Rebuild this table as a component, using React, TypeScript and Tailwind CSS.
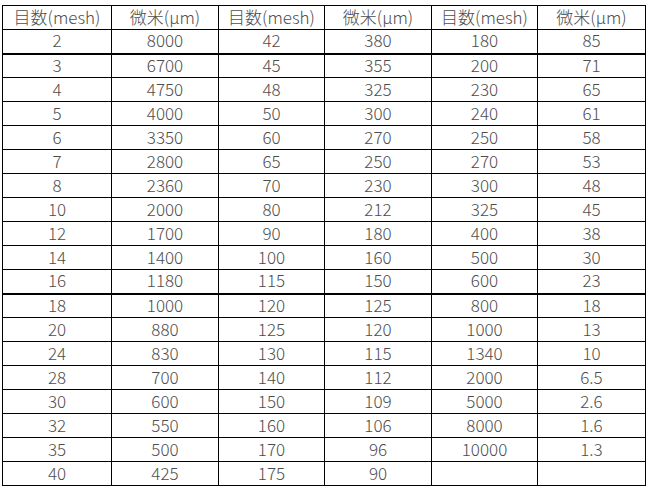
import React from 'react';

const header = ['目数(mesh)', '微米(μm)', '目数(mesh)', '微米(μm)', '目数(mesh)', '微米(μm)'];

const rows: string[][] = [
  ['2', '8000', '42', '380', '180', '85'],
  ['3', '6700', '45', '355', '200', '71'],
  ['4', '4750', '48', '325', '230', '65'],
  ['5', '4000', '50', '300', '240', '61'],
  ['6', '3350', '60', '270', '250', '58'],
  ['7', '2800', '65', '250', '270', '53'],
  ['8', '2360', '70', '230', '300', '48'],
  ['10', '2000', '80', '212', '325', '45'],
  ['12', '1700', '90', '180', '400', '38'],
  ['14', '1400', '100', '160', '500', '30'],
  ['16', '1180', '115', '150', '600', '23'],
  ['18', '1000', '120', '125', '800', '18'],
  ['20', '880', '125', '120', '1000', '13'],
  ['24', '830', '130', '115', '1340', '10'],
  ['28', '700', '140', '112', '2000', '6.5'],
  ['30', '600', '150', '109', '5000', '2.6'],
  ['32', '550', '160', '106', '8000', '1.6'],
  ['35', '500', '170', '96', '10000', '1.3'],
  ['40', '425', '175', '90', '', ''],
];

// rows followed by a heavier rule in the scan
const thick = new Set([0, 10]);

const App: React.FC = () => {
  return (
    <div className="w-[649px] h-[492px] bg-white pt-[5px] pl-[2px] overflow-hidden">
      <table
        className="w-[643px] table-fixed border-collapse border border-black text-[17px] font-light text-[#4d4d4d]"
        style={{ fontFamily: '"Noto Sans CJK JP", "Liberation Sans", sans-serif' }}
      >
        <colgroup>
          <col className="w-[109px]" />
          <col className="w-[107px]" />
          <col className="w-[106px]" />
          <col className="w-[107px]" />
          <col className="w-[106px]" />
          <col className="w-[108px]" />
        </colgroup>
        <thead>
          <tr className="h-[24px]">
            {header.map((h, i) => (
              <th key={i} className="border border-black p-0 pb-[3px] font-light leading-none text-center">
                {h}
              </th>
            ))}
          </tr>
        </thead>
        <tbody>
          {rows.map((row, r) => (
            <tr key={r} className="h-[24px]">
              {row.map((cell, c) => (
                <td
                  key={c}
                  className={
                    thick.has(r)
                      ? 'border border-b-2 border-black p-0 pb-[3px] leading-none text-center'
                      : 'border border-black p-0 pb-[3px] leading-none text-center'
                  }
                >
                  {cell}
                </td>
              ))}
            </tr>
          ))}
        </tbody>
      </table>
    </div>
  );
};

export default App;
